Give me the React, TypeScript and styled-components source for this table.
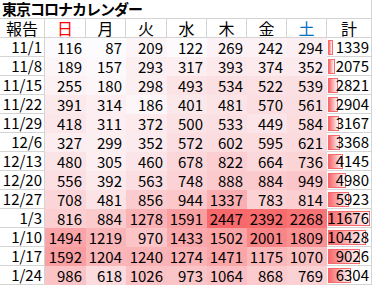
import React from "react";
import styled, { createGlobalStyle } from "styled-components";

const GlobalStyle = createGlobalStyle`
  html, body {
    margin: 0;
    padding: 0;
    background: #ffffff;
  }
  body {
    font-family: "Noto Sans CJK JP", "Liberation Sans", sans-serif;
    color: #000000;
  }
`;

const GRID = "#d4d4d4";

const Sheet = styled.div`
  display: grid;
  grid-template-columns: 45px 41px 40px 41px 40px 40px 40px 40px 45px;
  width: 372px;
`;

const Title = styled.div`
  grid-column: 1 / -1;
  height: 19px;
  box-sizing: border-box;
  border-bottom: 1px solid ${GRID};
  border-right: 1px solid ${GRID};
  padding-left: 2px;
  font-size: 15px;
  font-weight: 700;
  line-height: 18px;
  letter-spacing: -1px;
  white-space: nowrap;
`;

const Head = styled.div<{ $tone?: "red" | "blue" }>`
  height: 19px;
  box-sizing: border-box;
  border-right: 1px solid ${GRID};
  border-bottom: 1px solid ${GRID};
  text-align: center;
  font-size: 16px;
  line-height: 18px;
  color: ${({ $tone }) =>
    $tone === "red" ? "#ff0000" : $tone === "blue" ? "#0070c0" : "#000000"};
`;

const Label = styled.div`
  height: 19px;
  box-sizing: border-box;
  border-right: 1px solid ${GRID};
  border-bottom: 1px solid ${GRID};
  text-align: right;
  padding-right: 2px;
  font-size: 15px;
  line-height: 18px;
`;

const Heat = styled.div<{ $bg: string }>`
  height: 19px;
  box-sizing: border-box;
  background: ${({ $bg }) => $bg};
  text-align: right;
  padding-right: 4px;
  font-size: 15px;
  line-height: 19px;
`;

const Total = styled.div`
  position: relative;
  height: 19px;
  box-sizing: border-box;
  border-right: 1px solid ${GRID};
  border-bottom: 1px solid ${GRID};
  text-align: right;
  padding-right: 2px;
  font-size: 15px;
  line-height: 18px;
`;

const Bar = styled.span`
  position: absolute;
  left: 1px;
  top: 2px;
  height: 15px;
  box-sizing: border-box;
  border: 1px solid #f8696b;
  background: linear-gradient(to right, #f8696b, #fde4e5 85%, #ffffff);
`;

const Num = styled.span`
  position: relative;
`;

const rows: [string, number[], number][] = [
  ["11/1", [116, 87, 209, 122, 269, 242, 294], 1339],
  ["11/8", [189, 157, 293, 317, 393, 374, 352], 2075],
  ["11/15", [255, 180, 298, 493, 534, 522, 539], 2821],
  ["11/22", [391, 314, 186, 401, 481, 570, 561], 2904],
  ["11/29", [418, 311, 372, 500, 533, 449, 584], 3167],
  ["12/6", [327, 299, 352, 572, 602, 595, 621], 3368],
  ["12/13", [480, 305, 460, 678, 822, 664, 736], 4145],
  ["12/20", [556, 392, 563, 748, 888, 884, 949], 4980],
  ["12/27", [708, 481, 856, 944, 1337, 783, 814], 5923],
  ["1/3", [816, 884, 1278, 1591, 2447, 2392, 2268], 11676],
  ["1/10", [1494, 1219, 970, 1433, 1502, 2001, 1809], 10428],
  ["1/17", [1592, 1204, 1240, 1274, 1471, 1175, 1070], 9026],
  ["1/24", [986, 618, 1026, 973, 1064, 868, 769], 6304],
];

const heads: [string, "red" | "blue" | undefined][] = [
  ["報告", undefined],
  ["日", "red"],
  ["月", undefined],
  ["火", undefined],
  ["水", undefined],
  ["木", undefined],
  ["金", undefined],
  ["土", "blue"],
  ["計", undefined],
];

const all = rows.flatMap((r) => r[1]);
const lo = Math.min(...all);
const hi = Math.max(...all);
const maxTotal = Math.max(...rows.map((r) => r[2]));

// white -> excel red colour scale
const heat = (v: number) => {
  const t = (v - lo) / (hi - lo);
  const mix = (a: number, b: number) => Math.round(a + (b - a) * t);
  return `rgb(${mix(252, 248)}, ${mix(252, 105)}, ${mix(255, 107)})`;
};

const App: React.FC = () => {
  return (
    <>
      <GlobalStyle />
      <Sheet>
        <Title>東京コロナカレンダー</Title>
        {heads.map(([h, tone]) => (
          <Head key={h} $tone={tone}>
            {h}
          </Head>
        ))}
        {rows.map(([date, days, total]) => (
          <React.Fragment key={date}>
            <Label>{date}</Label>
            {days.map((v, i) => (
              <Heat key={i} $bg={heat(v)}>
                {v}
              </Heat>
            ))}
            <Total>
              <Bar style={{ width: Math.round((total / maxTotal) * 42) }} />
              <Num>{total}</Num>
            </Total>
          </React.Fragment>
        ))}
      </Sheet>
    </>
  );
};

export default App;
